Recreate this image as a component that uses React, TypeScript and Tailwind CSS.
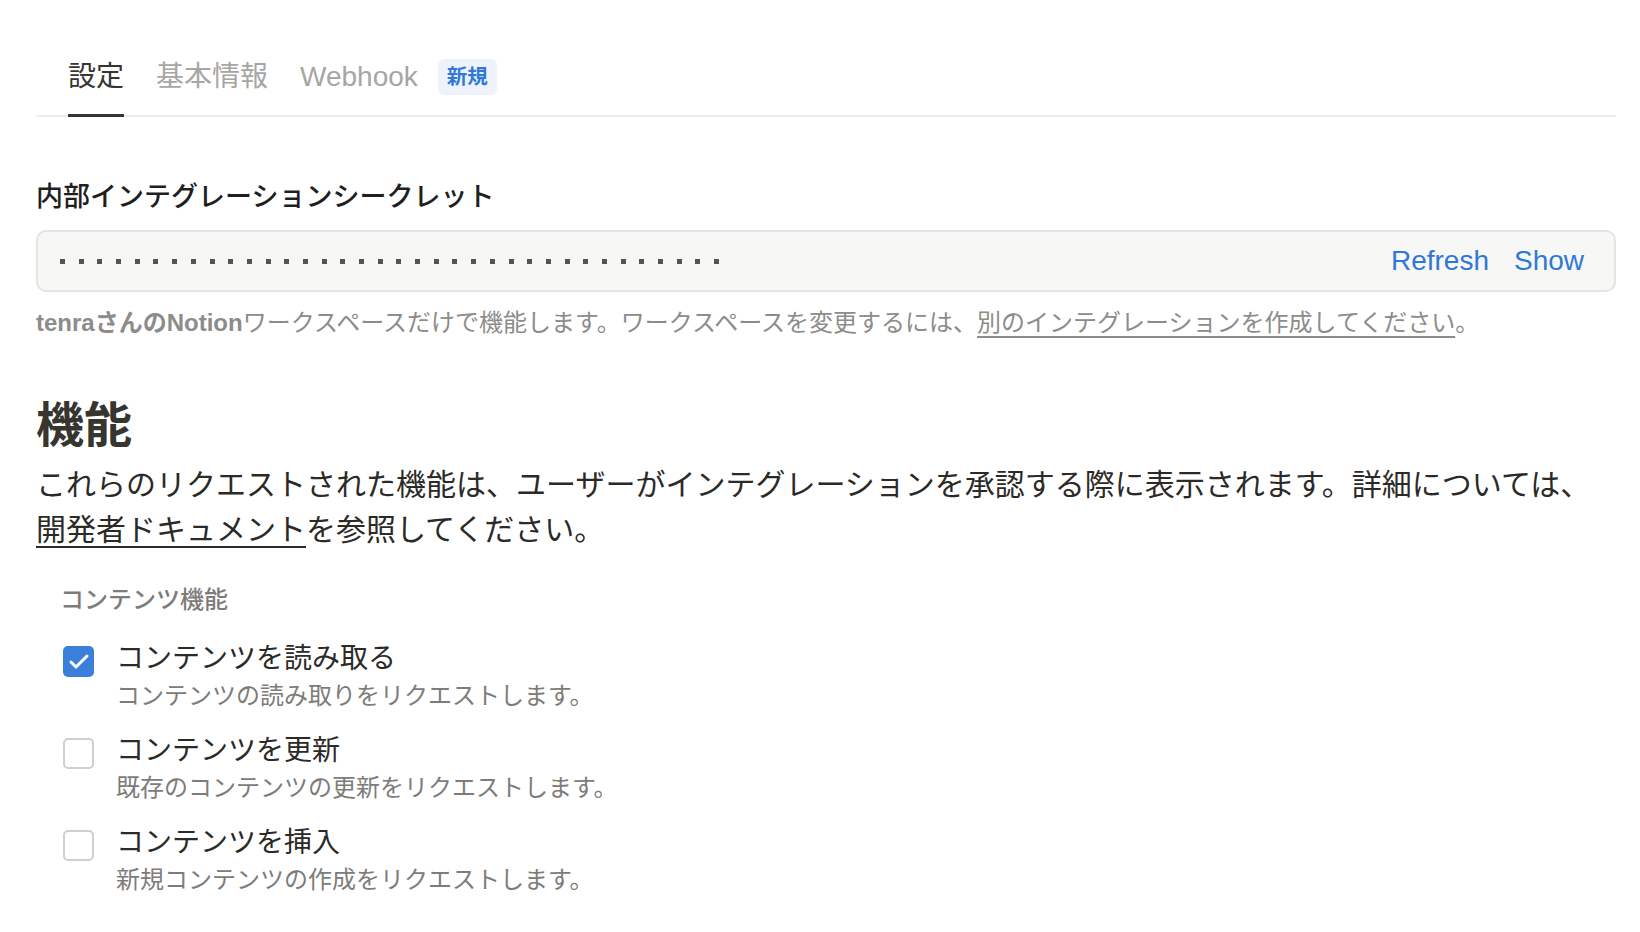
import { Check } from "lucide-react";

const font = "font-['Liberation_Sans','Noto_Sans_CJK_JP',sans-serif]";

const tabs = [
    { label: "設定", active: true },
    { label: "基本情報", active: false },
    { label: "Webhook", active: false, badge: "新規" },
];

const features = [
    { title: "コンテンツを読み取る", desc: "コンテンツの読み取りをリクエストします。", checked: true },
    { title: "コンテンツを更新", desc: "既存のコンテンツの更新をリクエストします。", checked: false },
    { title: "コンテンツを挿入", desc: "新規コンテンツの作成をリクエストします。", checked: false },
];

const App = () => {
    return (
        <div className={`min-h-screen bg-white text-[#37352f] pl-[36px] pr-[24px] pt-[59px] ${font}`}>
            {/* Tabs */}
            <div className="flex items-end border-b-2 border-[#ededec] pl-4">
                {tabs.map((tab) => (
                    <div key={tab.label} className="flex items-center px-4 pb-[20px]">
                        <div className="relative">
                            <span className={`text-[28px] leading-[36px] ${tab.active ? "text-[#37352f]" : "text-[#a6a6a4]"}`}>
                                {tab.label}
                            </span>
                            {tab.active && (
                                <div className="absolute left-0 right-0 -bottom-[22px] h-[3px] bg-[#37352f]" />
                            )}
                        </div>
                        {tab.badge && (
                            <span className="ml-[20px] h-[36px] px-[9px] rounded-[6px] bg-[#eef3fb] text-[#3178d8] text-[20.5px] font-bold flex items-center">
                                {tab.badge}
                            </span>
                        )}
                    </div>
                ))}
            </div>

            {/* Secret */}
            <div className="mt-[62px] text-[27px] leading-[36px] font-medium text-[#1f1f1f]">
                内部インテグレーションシークレット
            </div>
            <div className="mt-[15px] h-[62px] flex items-center justify-between rounded-[10px] border-2 border-[#e4e4e2] bg-[#f7f7f5] pl-[22px] pr-[30px]">
                <div className="flex items-center gap-[13.7px]">
                    {Array.from({ length: 36 }).map((_, i) => (
                        <span key={i} className="w-[5px] h-[5px] bg-[#55544f]" />
                    ))}
                </div>
                <div className="flex items-center gap-[25px] text-[28px] leading-[36px] text-[#2f78d8]">
                    <span>Refresh</span>
                    <span>Show</span>
                </div>
            </div>
            <p className="mt-[14px] text-[24px] leading-[34px] text-[#8c8c8a]">
                <span className="font-semibold">tenraさんのNotion</span>ワークスペースだけで機能します。ワークスペースを変更するには、
                <span className="underline decoration-[1.5px] underline-offset-[5px]">別のインテグレーションを作成してください</span>。
            </p>

            {/* Capabilities */}
            <h2 className="mt-[56px] text-[48px] leading-[60px] font-bold text-[#37352f]">機能</h2>
            <p className="mt-[6px] text-[30px] leading-[45px] text-[#2b2a27]">
                これらのリクエストされた機能は、ユーザーがインテグレーションを承認する際に表示されます。詳細については、
                <br />
                <span className="underline decoration-[2px] underline-offset-[6px]">開発者ドキュメント</span>を参照してください。
            </p>

            <div className="pl-[24px]">
                <div className="mt-[32px] text-[24px] leading-[32px] font-medium text-[#7d7c79]">コンテンツ機能</div>
                <div className="mt-[25px] flex flex-col gap-[20px]">
                    {features.map((f) => (
                        <div key={f.title} className="flex items-start">
                            <div
                                className={`ml-[3px] mt-[5px] w-[31px] h-[31px] shrink-0 rounded-[5px] flex items-center justify-center ${
                                    f.checked ? "bg-[#3a7fd9]" : "border-2 border-[#cfcfcd] bg-white"
                                }`}
                            >
                                {f.checked && <Check className="w-[24px] h-[24px] text-white" strokeWidth={3} />}
                            </div>
                            <div className="ml-[22px]">
                                <div className="text-[28px] leading-[36px] text-[#2b2a27]">{f.title}</div>
                                <div className="mt-[2px] text-[24px] leading-[34px] text-[#7d7c79]">{f.desc}</div>
                            </div>
                        </div>
                    ))}
                </div>
            </div>
        </div>
    );
};

export default App;
